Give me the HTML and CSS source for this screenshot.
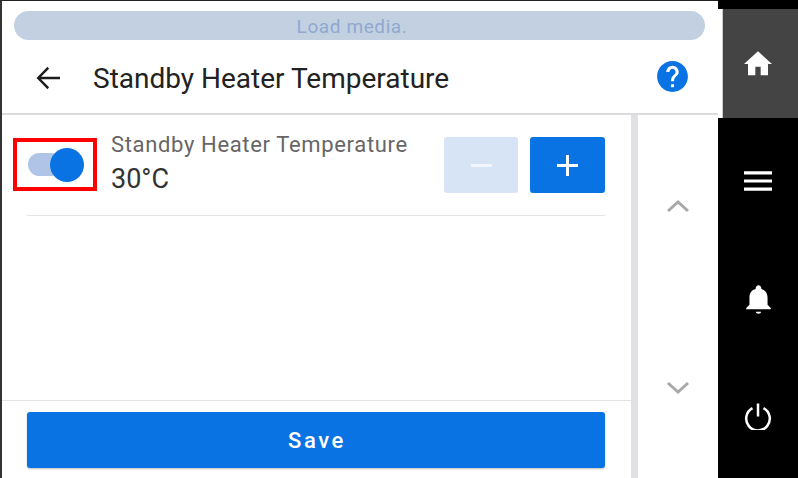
FILE: index.html
```html
<!DOCTYPE html>
<html lang="en">
<head>
    <meta charset="UTF-8">
    <meta name="viewport" content="width=device-width, initial-scale=1.0">
    <title>Standby Heater Temperature</title>
    <link rel="stylesheet" href="styles.css">
</head>
<body>
    <div class="main">
        <div class="status-pill">Load media.</div>

        <div class="header">
            <svg class="back-icon" viewBox="0 0 24 24"><path d="M21 11H6.8l6-6-1.2-1.4L3.4 12l8.2 8.4 1.2-1.4-6-6H21z"/></svg>
            <h1>Standby Heater Temperature</h1>
            <svg class="help-icon" viewBox="0 0 24 24"><path d="M12 2C6.48 2 2 6.48 2 12s4.48 10 10 10 10-4.48 10-10S17.52 2 12 2zm1 17h-2v-2h2v2zm2.07-7.75l-.9.92C13.45 12.9 13 13.5 13 15h-2v-.5c0-1.1.45-2.1 1.17-2.83l1.24-1.26c.37-.36.59-.86.59-1.41 0-1.1-.9-2-2-2s-2 .9-2 2H8c0-2.21 1.79-4 4-4s4 1.79 4 4c0 .88-.36 1.68-.93 2.25z"/></svg>
        </div>

        <div class="content">
            <div class="pane">
                <div class="setting-row">
                    <div class="toggle-box">
                        <div class="toggle">
                            <div class="toggle-knob"></div>
                        </div>
                    </div>
                    <div class="setting-text">
                        <div class="setting-label">Standby Heater Temperature</div>
                        <div class="setting-value">30°C</div>
                    </div>
                    <div class="step-buttons">
                        <div class="step-button disabled"><span class="minus"></span></div>
                        <div class="step-button"><span class="plus"></span></div>
                    </div>
                </div>
                <div class="divider"></div>

                <div class="footer">
                    <div class="save-button">Save</div>
                </div>
            </div>

            <div class="scrollbar"></div>

            <div class="arrows">
                <svg class="arrow-icon" viewBox="0 0 24 14"><path d="M2 12L12 3l10 9"/></svg>
                <svg class="arrow-icon" viewBox="0 0 24 14"><path d="M2 2l10 9 10-9"/></svg>
            </div>
        </div>
    </div>

    <div class="side">
        <div class="side-item active">
            <svg class="side-icon home" viewBox="0 0 24 24"><path d="M10 20.5v-6.5h4v6.5h5.5V12h3L12 2.5 1.500 12h3v8.500z"/></svg>
        </div>
        <div class="side-item first">
            <svg class="side-icon" viewBox="0 0 26 18"><path d="M0 0h26v3H0zM0 7.500h26v3H0zM0 15h26v3H0z"/></svg>
        </div>
        <div class="side-item">
            <svg class="side-icon bell" viewBox="0 0 24 24"><path d="M12 23c1.100 0 2-.6 2-1.500h-4c0 .9.900 1.500 2 1.500zm7-7v-5.500c0-3.300-1.700-5.900-4.800-6.600V3.500C14.200 2.200 13.200 1 12 1S9.800 2.200 9.800 3.500v.4C6.700 4.600 5 7.200 5 10.500V16l-2.500 2.500v1h19v-1L19 16z"/></svg>
        </div>
        <div class="side-item">
            <svg class="side-icon power" viewBox="0 0 28 28"><path d="M14 1.500v13M8.500 6.200a11.800 11.800 0 1 0 11 0"/></svg>
        </div>
    </div>
</body>
</html>
```

FILE: styles.css
```css
html, body {
    margin: 0;
    padding: 0;
}

body {
    display: flex;
    width: 798px;
    height: 478px;
    overflow: hidden;
    background-color: #000;
    font-family: Roboto, "Liberation Sans", sans-serif;
}

/* Left part with the settings */
.main {
    display: flex;
    flex-direction: column;
    box-sizing: border-box;
    width: 718px;
    height: 478px;
    background-color: #fff;
    border-top: 1px solid #222;
    border-left: 2px solid #333;
}

.status-pill {
    height: 29px;
    margin: 10px 13px 0 12px;
    padding-right: 15px;
    border-radius: 15px;
    background-color: #c2d0e2;
    color: #8fa9cf;
    font-size: 19px;
    line-height: 31px;
    letter-spacing: 0.6px;
    text-align: center;
}

.header {
    display: flex;
    align-items: center;
    box-sizing: border-box;
    height: 75px;
    padding: 0 27px 0 30px;
    border-bottom: 2px solid #dcdcdc;
}

.back-icon {
    width: 32px;
    height: 32px;
    margin-top: 2px;
    fill: #1c1c1c;
}

.header h1 {
    flex: 1;
    margin: 3px 0 0 29px;
    color: #222;
    font-size: 28px;
    font-weight: 400;
}

.help-icon {
    width: 37px;
    height: 37px;
    fill: #0a73e3;
}

.content {
    display: flex;
    flex: 1;
}

.pane {
    display: flex;
    flex-direction: column;
    width: 629px;
}

.setting-row {
    display: flex;
    box-sizing: border-box;
    height: 100px;
    padding: 22px 26px 0 11px;
}

.toggle-box {
    display: flex;
    align-items: center;
    box-sizing: border-box;
    width: 84px;
    height: 53px;
    margin-top: 1px;
    padding-left: 11px;
    border: 4px solid #f00;
}

.toggle {
    position: relative;
    width: 34px;
    height: 23px;
    border-radius: 12px;
    background-color: #b0c4e8;
}

.toggle-knob {
    position: absolute;
    top: -5px;
    left: 22px;
    width: 34px;
    height: 34px;
    border-radius: 50%;
    background-color: #0a73e3;
}

.setting-text {
    flex: 1;
    margin-left: 14px;
}

.setting-label {
    margin-top: -7px;
    color: #666;
    font-size: 22px;
    line-height: 30px;
    letter-spacing: 0.65px;
}

.setting-value {
    margin-top: 4px;
    color: #333;
    font-size: 27px;
    line-height: 30px;
}

.step-buttons {
    display: flex;
    gap: 12px;
}

.step-button {
    display: flex;
    align-items: center;
    justify-content: center;
    width: 75px;
    height: 56px;
    border-radius: 3px;
    background-color: #0a73e3;
}

.step-button.disabled {
    width: 74px;
    background-color: #d7e4f5;
}

.minus {
    width: 21px;
    height: 3px;
    background-color: #f2f6fc;
}

.plus {
    position: relative;
    width: 21px;
    height: 3px;
    background-color: #fff;
}

.plus::after {
    content: "";
    position: absolute;
    top: -9px;
    left: 9px;
    width: 3px;
    height: 21px;
    background-color: #fff;
}

.divider {
    height: 1px;
    margin: 0 26px 0 25px;
    background-color: #e4e4e4;
}

.footer {
    margin-top: auto;
    padding: 11px 26px 10px 25px;
    border-top: 1px solid #e4e4e4;
}

.save-button {
    height: 56px;
    padding-left: 2px;
    border-radius: 3px;
    background-color: #0a73e3;
    box-shadow: 0 1px 2px rgba(0, 0, 0, 0.25);
    color: #fff;
    font-size: 22px;
    font-weight: 500;
    line-height: 57px;
    letter-spacing: 2.6px;
    text-align: center;
}

.scrollbar {
    width: 7px;
    background-color: #e0e1e4;
}

.arrows {
    display: flex;
    flex: 1;
    flex-direction: column;
    align-items: center;
    gap: 168px;
    padding-top: 84px;
}

.arrow-icon {
    width: 24px;
    height: 14px;
    fill: none;
    stroke: #a8a8a8;
    stroke-width: 3;
}

/* Black bar on the right */
.side {
    display: flex;
    flex-direction: column;
    width: 80px;
    padding-top: 9px;
}

.side-item {
    display: flex;
    align-items: center;
    justify-content: center;
    height: 118px;
}

.side-item.active {
    box-sizing: border-box;
    height: 109px;
    padding-right: 4px;
    border-left: 4px solid #fff;
    background-color: #444;
    box-shadow: inset 1px 0 0 #ccc;
}

.side-item.first {
    margin-top: 4px;
}

.side-icon {
    width: 28px;
    height: 28px;
    fill: #fff;
}

.side-icon.home {
    width: 32px;
    height: 32px;
}

.side-icon.bell {
    width: 31px;
    height: 31px;
}

.side-icon.power {
    margin-top: -3px;
    fill: none;
    stroke: #fff;
    stroke-width: 2.500;
}
```
